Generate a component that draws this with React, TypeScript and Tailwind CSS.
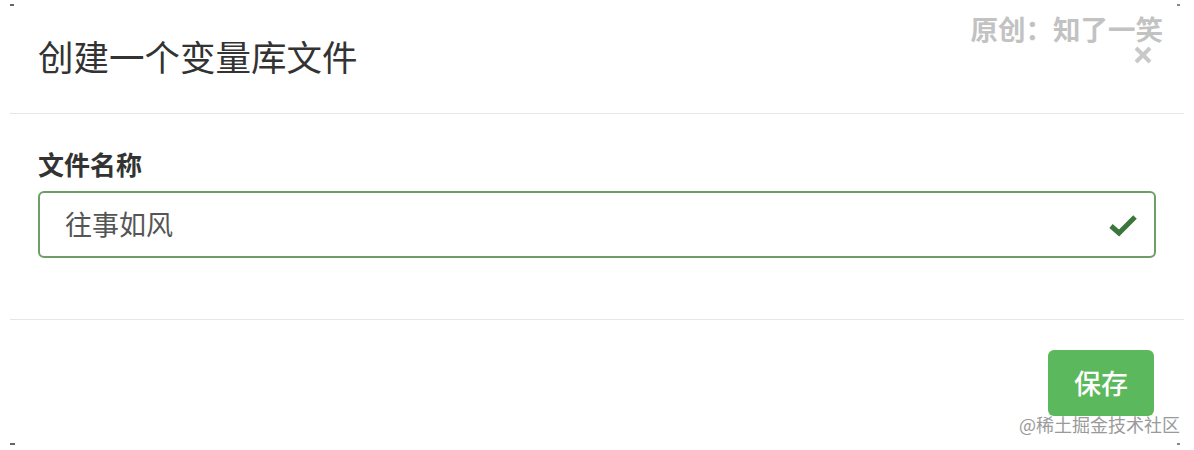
export default function App() {
  const cjk = { fontFamily: '"Microsoft YaHei", "Noto Sans CJK SC", "Liberation Sans", sans-serif' }
  return (
    <div className="relative w-[1194px] h-[450px] bg-white px-[10px] text-[#333]" style={cjk}>
      {/* corner crop marks */}
      <span className="absolute left-[10px] top-[4px] w-[4px] h-[2px] bg-[#666]" />
      <span className="absolute right-[14px] top-[4px] w-[3px] h-[2px] bg-[#888]" />
      <span className="absolute left-[10px] bottom-[5px] w-[5px] h-[2px] bg-[#666]" />
      <span className="absolute right-[14px] bottom-[5px] w-[3px] h-[2px] bg-[#888]" />

      <div className="absolute right-[31px] top-[10px] text-[27.5px] font-bold text-[#c2c2c2] leading-[36px]">
        原创：知了一笑
      </div>

      <div className="flex h-[114px] items-center justify-between border-b border-[#e6e6e6] pl-[28px] pr-[31px]">
        <h4 className="text-[35.5px] leading-none text-[#333] pb-[1px]">创建一个变量库文件</h4>
        <svg width="20" height="20" viewBox="0 0 20 20" className="mb-[4px]">
          <path d="M3 3 L17 17 M17 3 L3 17" stroke="#c9c9c9" strokeWidth="4" strokeLinecap="butt" />
        </svg>
      </div>

      <div className="h-[206px] border-b border-[#e6e6e6] px-[28px] pt-[34px]">
        <label className="block text-[26px] font-bold leading-[32px] text-[#333]">文件名称</label>
        <div className="mt-[11px] flex h-[67px] items-center justify-between rounded-[6px] border-2 border-[#6f9d68] pl-[25px] pr-[16px]">
          <span className="text-[27px] text-[#555]">往事如风</span>
          <svg width="30" height="24" viewBox="0 0 30 24">
            <path d="M3 13 L11 20 L27 4" fill="none" stroke="#3c763d" strokeWidth="5" />
          </svg>
        </div>
      </div>

      <div className="flex justify-end pr-[30px] pt-[30px]">
        <button className="h-[66px] w-[106px] rounded-[6px] bg-[#5cb85c] text-[27px] font-medium text-white">保存</button>
      </div>

      <div className="absolute right-[14px] bottom-[14px] text-[18px] leading-[24px] text-[#9a9a9a]">
        @稀土掘金技术社区
      </div>
    </div>
  )
}
